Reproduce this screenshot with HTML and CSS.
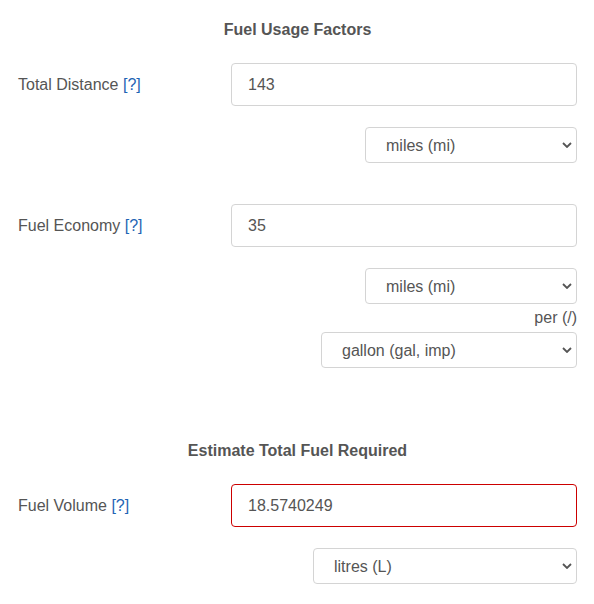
FILE: index.html
```html
<!DOCTYPE html>
<html>
<head>
<meta charset="utf-8">
<link rel="stylesheet" href="styles.css">
</head>
<body>
<div class="wrap">
  <div class="title">Fuel Usage Factors</div>

  <div class="group">
    <div class="row">
      <label class="label">Total Distance <a class="help" href="#">[?]</a></label>
      <input class="field" type="text" value="143">
    </div>
    <div class="unit">
      <div class="sel w212">
        <select><option>miles (mi)</option></select>
        <svg class="chev" width="10" height="6" viewBox="0 0 10 6"><path d="M1 1 L5 5 L9 1" fill="none" stroke="#555" stroke-width="1.8"/></svg>
      </div>
    </div>
  </div>

  <div class="group g2">
    <div class="row">
      <label class="label">Fuel Economy <a class="help" href="#">[?]</a></label>
      <input class="field" type="text" value="35">
    </div>
    <div class="unit">
      <div class="sel w212">
        <select><option>miles (mi)</option></select>
        <svg class="chev" width="10" height="6" viewBox="0 0 10 6"><path d="M1 1 L5 5 L9 1" fill="none" stroke="#555" stroke-width="1.8"/></svg>
      </div>
    </div>
    <div class="per">per (/)</div>
    <div class="unit nomt">
      <div class="sel w256">
        <select><option>gallon (gal, imp)</option></select>
        <svg class="chev" width="10" height="6" viewBox="0 0 10 6"><path d="M1 1 L5 5 L9 1" fill="none" stroke="#555" stroke-width="1.8"/></svg>
      </div>
    </div>
  </div>

  <div class="title t2">Estimate Total Fuel Required</div>

  <div class="group">
    <div class="row">
      <label class="label">Fuel Volume <a class="help" href="#">[?]</a></label>
      <input class="field error" type="text" value="18.5740249">
    </div>
    <div class="unit">
      <div class="sel w264">
        <select><option>litres (L)</option></select>
        <svg class="chev" width="10" height="6" viewBox="0 0 10 6"><path d="M1 1 L5 5 L9 1" fill="none" stroke="#555" stroke-width="1.8"/></svg>
      </div>
    </div>
  </div>
</div>
</body>
</html>
```

FILE: styles.css
```css
* { box-sizing: border-box; }
body {
  margin: 0;
  font-family: "Liberation Sans", Arial, sans-serif;
  font-size: 16px;
  color: #555;
  background: #fff;
}
.wrap {
  padding: 20px 17px 0 18px;
}
.title {
  text-align: center;
  font-weight: bold;
  line-height: 20px;
  margin-bottom: 23px;
}
.t2 {
  margin-top: 73px;
}
.g2 {
  margin-top: 41px;
}
.row {
  display: grid;
  grid-template-columns: 213px 1fr;
  align-items: center;
}
.label {
  line-height: 20px;
}
.help {
  color: #1e64b4;
  text-decoration: none;
}
.field {
  height: 43px;
  width: 100%;
  border: 1px solid #d4d4d4;
  border-radius: 4px;
  padding: 0 16px;
  font-family: inherit;
  font-size: 16px;
  color: #555;
  outline: none;
}
.field.error {
  border-color: #cc0000;
}
.unit {
  display: flex;
  justify-content: flex-end;
  margin-top: 21px;
}
.unit.nomt {
  margin-top: 0;
}
.sel {
  position: relative;
  height: 36px;
}
.w212 { width: 212px; }
.w256 { width: 256px; }
.w264 { width: 264px; }
.sel select {
  appearance: none;
  -webkit-appearance: none;
  width: 100%;
  height: 36px;
  border: 1px solid #d4d4d4;
  border-radius: 4px;
  background: #fff;
  padding: 0 30px 0 20px;
  font-family: inherit;
  font-size: 16px;
  color: #555;
  outline: none;
}
.chev {
  position: absolute;
  right: 5px;
  top: 15px;
  pointer-events: none;
}
.per {
  text-align: right;
  line-height: 28px;
}
```
